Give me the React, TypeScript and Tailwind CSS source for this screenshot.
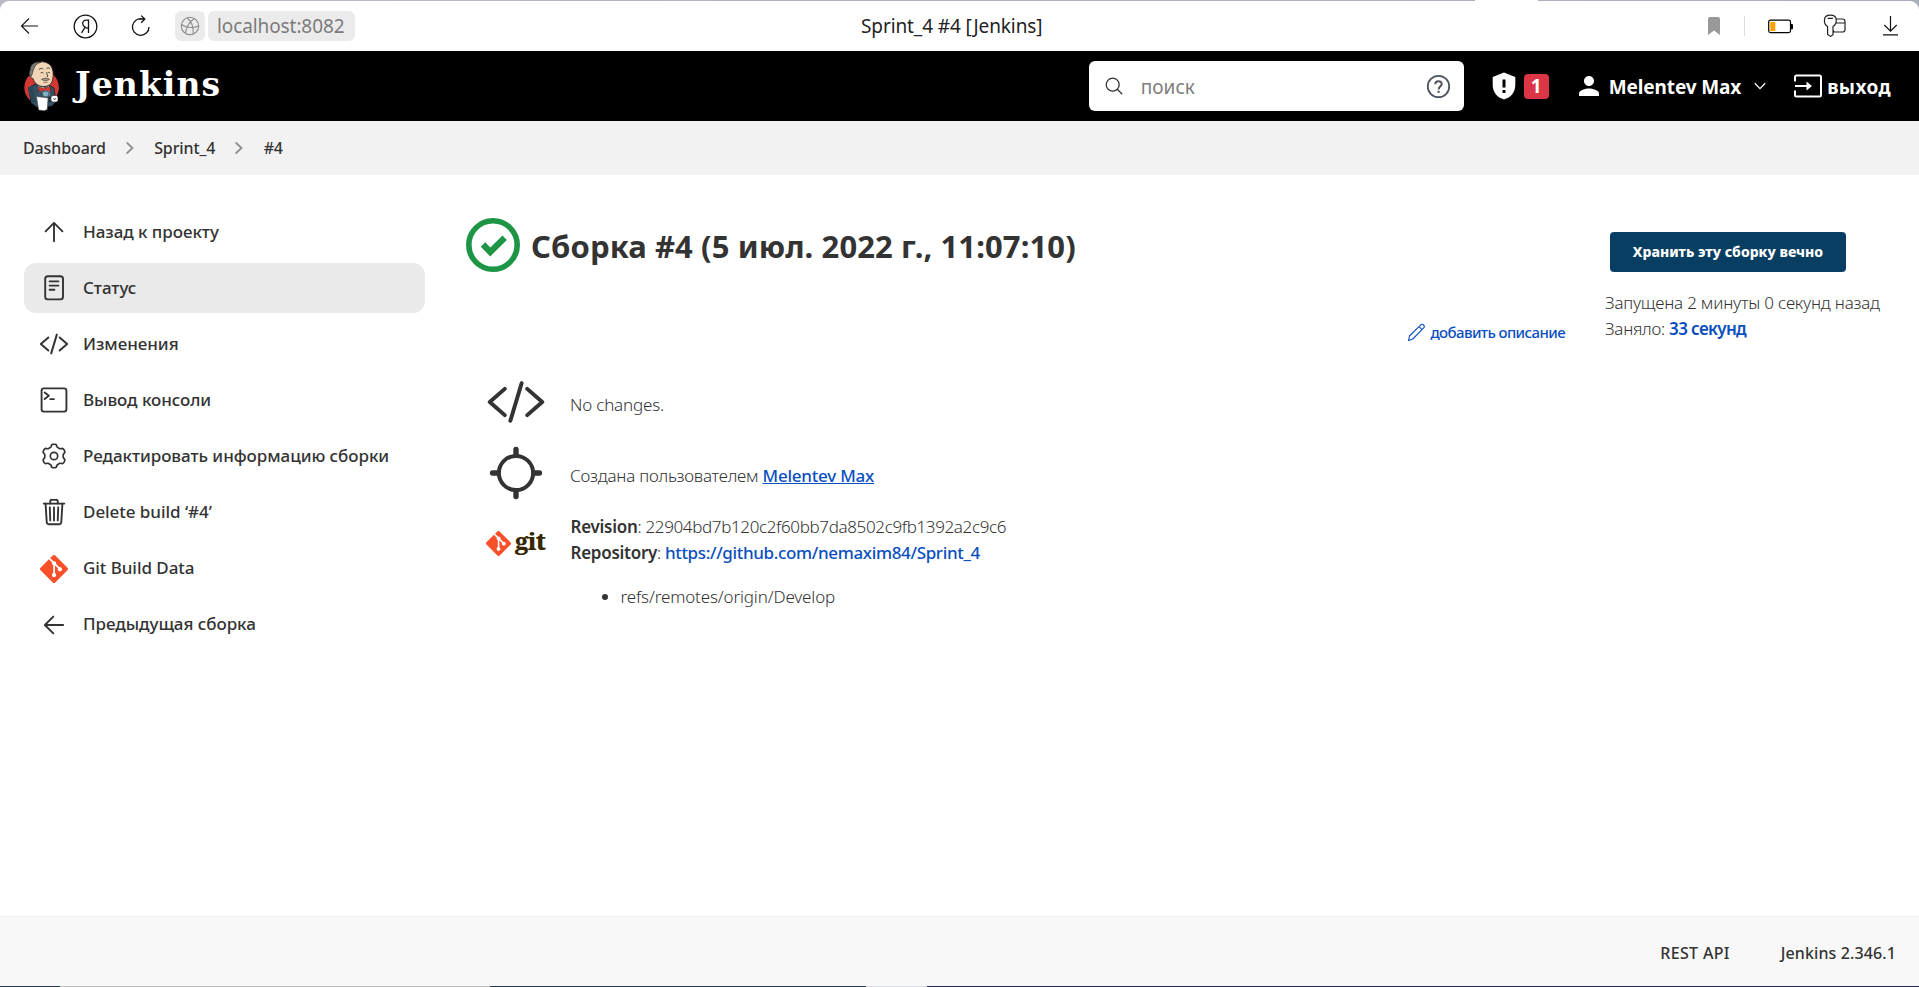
import React from "react";
import { IoTrashOutline } from "react-icons/io5";
import { SiGit } from "react-icons/si";

const CodeIcon = ({ className }: { className: string }) => (
  <svg viewBox="0 0 512 512" className={className} fill="none" stroke="currentColor" strokeWidth="34" strokeLinecap="round" strokeLinejoin="round">
    <path d="M160 368 32 256l128-112M352 368l128-112-128-112M304 96l-96 320" />
  </svg>
);

const stroke = { fill: "none", stroke: "currentColor", strokeWidth: 32, strokeLinecap: "round", strokeLinejoin: "round" } as const;

const ArrowUp = () => (
  <svg viewBox="0 0 512 512" className="size-[30px]" {...stroke}><path d="M112 244 256 100l144 144M256 120v292" /></svg>
);
const ArrowLeft = () => (
  <svg viewBox="0 0 512 512" className="size-[30px]" {...stroke}><path d="M244 400 100 256l144-144M120 256h292" /></svg>
);
const DocIcon = () => (
  <svg viewBox="0 0 30 30" className="size-[30px]" {...stroke} strokeWidth="1.9">
    <rect x="6.2" y="3.2" width="17.8" height="23.2" rx="2.6" />
    <path d="M10.6 8.4h8.8M10.6 12.6h8.8M10.6 16.8h4.8" />
  </svg>
);
const TerminalIcon = () => (
  <svg viewBox="0 0 512 512" className="size-[30px]" {...stroke}>
    <rect x="44" y="58" width="424" height="396" rx="40" />
    <path d="M96 128l72 56-72 56M192 240h64" />
  </svg>
);

// Six-lobed gear outline sampled in polar coordinates.
const gearPoints = Array.from({ length: 144 }, (_, i) => {
  const a = (i / 144) * Math.PI * 2;
  const r = 10.5 + 1.3 * Math.tanh(2.2 * Math.cos(6 * a));
  return `${(15 + r * Math.sin(a)).toFixed(2)},${(15 - r * Math.cos(a)).toFixed(2)}`;
}).join(" ");
const GearIcon = () => (
  <svg viewBox="0 0 30 30" className="size-[30px]" {...stroke} strokeWidth="1.7">
    <polygon points={gearPoints} />
    <circle cx="15" cy="15" r="3.700" />
  </svg>
);

const Butler = () => (
  <svg viewBox="0 0 38 52" className="h-[52px] w-[38px]">
    <circle cx="18.6" cy="27.5" r="17.3" fill="#d33833" />
    <path d="M6 28 12 24l14 1 5 3 2 14-4 4-14 2-7-5z" fill="#335061" stroke="#101a20" strokeWidth=".8" />
    <path d="M4.8 27.5 9.5 25l4 18-4-1-3.3-7z" fill="#2c4656" />
    <path d="M15 26l7 2 4-2 1 9-5 3-5-3z" fill="#f4f4f4" />
    <path d="M9 6c4-6 17-6 20 2 2 5 1 9 .5 12-1 5-5 6.500-9 6.500-5 0-9-3-10.500-8C6 18 6 13 9 12z" fill="#f0d6b7" stroke="#231f20" strokeWidth=".8" />
    <path d="M18 2.200C11 1.200 7 5 7.200 10c-1.500 2-1.200 5 .5 7l1.800-3.500c-.3-2 .8-3 1.500-5C11.600 5.500 14 3.500 18 2.200z" fill="#7b7878" stroke="#231f20" strokeWidth=".6" />
    <path d="M16 9.500c1.500-1.400 3-1.400 4.400-.4M23.500 8.500c1.200-1 2.400-.8 3.400.2M17.500 13c1.200-.8 2.200-.6 3 .1M24.500 12.800c1-.5 1.600-.5 2.400 0M23.500 12.500c0 2 2.200 3 .7 4.500" fill="none" stroke="#231f20" strokeWidth=".8" />
    <path d="M18.500 19.500c2-1.600 6-1.800 8-.2-1.500 1.400-5.500 1.800-8 .2zM20.500 22.300h4" fill="#a89a86" stroke="#3a312a" strokeWidth=".6" />
    <path d="M15.500 26.500l5 2 6.500-2 .8 5-5.500-1.200-6.500 1.700z" fill="#d33833" stroke="#5c1513" strokeWidth=".5" />
    <path d="M16 32l6-1.500 5 1.500-1 5-5 1-4-1.500z" fill="#335061" />
    <path d="M19 32.500l3.500-1.500 3.500 1.500-1 4h-4.500z" fill="#81b0c4" stroke="#335061" strokeWidth=".5" />
    <path d="M13.500 36.500 25 38l-.8 11.500-3 1.200-5.500-.6z" fill="#fff" stroke="#444" strokeWidth=".5" />
    <path d="M25 38h5M25 41h5" stroke="#1d1919" strokeWidth="1" />
    <rect x="28" y="35.500" width="7" height="6.500" rx="2" fill="#fff" stroke="#222" strokeWidth=".6" />
    <path d="M30 38.500l2 1.200 1-1.800" fill="none" stroke="#222" strokeWidth=".7" />
  </svg>
);

const BrowserBar = () => (
  <div className="h-[51px] bg-[#b4b4bf] bg-gradient-to-r from-[#b9b9c6] to-[#a9aeb8] pt-px">
    <div className="relative flex h-[50px] items-center rounded-t-[9px] bg-white text-black">
      <div className="absolute -top-px left-[1475px] h-px w-[63px] bg-white" />
      <svg className="ml-[20px] size-[20px]" viewBox="0 0 20 20" fill="none" stroke="#111" strokeWidth="1.100"><path d="M18 10H1.500M9 2.500 1.500 10 9 17.500" /></svg>
      <svg className="ml-[33px] size-[25px]" viewBox="0 0 25 25" fill="none" stroke="#111" strokeWidth="1.300">
        <circle cx="12.500" cy="12.500" r="11.300" />
        <path d="M15.500 19V6.200h-2.300c-2.200 0-3.500 1.300-3.500 3.300 0 1.700.9 2.700 2.500 3.700l-3.700 5.600M12.200 13.400c1 .6 2 .9 3.300.6" />
      </svg>
      <svg className="ml-[32px] size-[22px]" viewBox="0 0 22 22" fill="none" stroke="#111" strokeWidth="1.300"><path d="M12.500 3.900A8.300 8.300 0 1 0 19 12M8.500 4h6.300M11.200.6 14.800 4l-3.600 3.700" /></svg>
      <div className="ml-[23px] flex size-[30px] items-center justify-center rounded-[6px] bg-[#ebebeb]">
        <svg className="size-[20px]" viewBox="0 0 20 20" fill="none" stroke="#8a8a8a" strokeWidth="1.100"><circle cx="10" cy="10" r="8.700" /><path d="M14.500 2.500C10 5 6 11 5.500 17.500M7 1.800c4 3 6.500 9 6.300 16M1.500 8.500c5 3.500 12 4 16.500 1.500" /></svg>
      </div>
      <div className="ml-[3px] flex h-[30px] w-[147px] items-center rounded-[6px] bg-[#ebebeb] pt-px pl-[9px] text-[19px] tracking-[-0.1px] text-[#7b7b7b]">localhost:8082</div>
      <div className="ml-[506px] pt-px text-[19px] tracking-[-0.1px] text-[#222]">Sprint_4 #4 [Jenkins]</div>
      <svg className="ml-auto h-[18px] w-[12px]" viewBox="0 0 12 18"><path d="M0 2a2 2 0 0 1 2-2h8a2 2 0 0 1 2 2v16l-6-4.500L0 18z" fill="#999" /></svg>
      <div className="ml-[24px] h-[20px] w-px bg-[#dcdcdc]" />
      <svg className="ml-[23px] h-[15px] w-[26px]" viewBox="0 0 26 15"><rect x=".7" y="1.200" width="21.800" height="12.400" rx="1.800" fill="none" stroke="#000" strokeWidth="1.200" /><rect x="2.300" y="3" width="5" height="9" fill="#ffa200" /><path d="M23 5h1.500l.5.600v4l-.5.600H23z" fill="#000" /></svg>
      <svg className="ml-[29px] size-[24px]" viewBox="0 0 24 24" fill="none" stroke="#222" strokeWidth="1.200"><path d="M4.600 12.500C1.800 11 1.200 8 1.500 5.500 1.700 2.500 3 1.200 7.300 1.200s5.700 1.300 5.900 4.300c.2 2.500-.4 5.500-3.200 7v8.200l-2.400 1.700-3-1.900zM4.600 4.400h5.300M13 5h6.500a2.500 2.500 0 0 1 2.500 2.500v8a2.500 2.500 0 0 1-2.500 2.500H12a2 2 0 0 1-2-2M13 9h9" /></svg>
      <svg className="mr-[20px] ml-[35px] h-[20px] w-[17px]" viewBox="0 0 17 20" fill="none" stroke="#111" strokeWidth="1.200"><path d="M8.500 0v15M2.300 9l6.200 6.200L14.700 9M1 18.800h15" /></svg>
    </div>
  </div>
);

const Header = () => (
  <header className="flex h-[70px] items-center bg-black text-white">
    <div className="ml-[23px]"><Butler /></div>
    <div className="ml-[14px] pb-[4px] font-['DejaVu_Serif',serif] text-[33px] leading-none font-bold tracking-[1.1px]">Jenkins</div>
    <div className="ml-auto flex h-[50px] w-[375px] items-center rounded-[6px] bg-white">
      <svg className="ml-[16px] size-[18px]" viewBox="0 0 18 18" fill="none" stroke="#333" strokeWidth="1.300" strokeLinecap="round"><circle cx="7.700" cy="7.700" r="6.500" /><path d="M12.500 12.500 16.800 16.800" /></svg>
      <div className="ml-[18px] pt-[2px] text-[19px] text-[#7d7d7d]">поиск</div>
      <svg className="mr-[13px] ml-auto size-[25px]" viewBox="0 0 25 25" fill="none" stroke="#4d545d" strokeWidth="1.800"><circle cx="12.500" cy="12.500" r="10.700" /><path d="M9.300 10.200c0-4 6.400-4 6.400-.2 0 2.600-3.100 2.600-3.100 5.400" strokeWidth="2" /><path d="M11.500 16.800h2.100v2.100h-2.100z" fill="#4d545d" stroke="none" /></svg>
    </div>
    <svg className="ml-[28px] h-[28px] w-[24px]" viewBox="0 0 24 28"><path d="M12 .5 23.300 5v8c0 7-4.500 12.500-11.300 14.500C5.200 25.500.700 20 .700 13V5z" fill="#fff" /><path d="M10.500 7.500h3v8h-3zM10.500 18h3v3h-3z" fill="#000" /></svg>
    <div className="ml-[8px] flex size-[25px] items-center justify-center rounded-[4px] bg-[#dc3545] pt-px text-[19px] font-bold">1</div>
    <svg className="ml-[30px] size-[20px]" viewBox="4 4 16 16" fill="#fff"><path d="M12 12c2.210 0 4-1.790 4-4s-1.790-4-4-4-4 1.790-4 4 1.790 4 4 4zm0 2c-2.670 0-8 1.340-8 4v2h16v-2c0-2.660-5.330-4-8-4z" /></svg>
    <div className="ml-[10px] pt-[2px] text-[19px] font-bold tracking-[-0.13px]">Melentev Max</div>
    <svg className="ml-[13px] h-[8px] w-[12px]" viewBox="0 0 12 8" fill="none" stroke="#fff" strokeWidth="1.300"><path d="M.8 1.200 6 6.600l5.200-5.400" /></svg>
    <svg className="ml-[28px] h-[24px] w-[28px]" viewBox="0 0 28 24" fill="none" stroke="#fff" strokeWidth="2"><path d="M1 7.500V3a1.500 1.500 0 0 1 1.500-1.500h23A1.500 1.500 0 0 1 27 3v18a1.500 1.500 0 0 1-1.500 1.500h-23A1.500 1.500 0 0 1 1 21v-4.500M1 12h14.500" /><path d="M12.500 7.500 18 12l-5.500 4.500z" fill="#fff" stroke="none" /></svg>
    <div className="mr-[28px] ml-[5px] pt-[2px] text-[19px] font-bold tracking-[0.4px]">выход</div>
  </header>
);

const Sep = () => (
  <svg className="h-[14px] w-[8px]" viewBox="0 0 8 14" fill="none" stroke="#8f8f8f" strokeWidth="1.800" strokeLinecap="round"><path d="M1.200 2 6.500 7l-5.300 5" /></svg>
);

const tasks = [
  { label: "Назад к проекту", icon: <ArrowUp /> },
  { label: "Статус", icon: <DocIcon />, active: true },
  { label: "Изменения", icon: <CodeIcon className="size-[30px]" /> },
  { label: "Вывод консоли", icon: <TerminalIcon /> },
  { label: "Редактировать информацию сборки", icon: <GearIcon /> },
  { label: "Delete build ‘#4’", icon: <IoTrashOutline size={30} /> },
  { label: "Git Build Data", icon: <SiGit size={28} color="#f9502c" /> },
  { label: "Предыдущая сборка", icon: <ArrowLeft /> },
];

const Sidebar = () => (
  <nav className="mt-[32px] ml-[24px] flex w-[401px] shrink-0 flex-col gap-[6.1px]">
    {tasks.map((t) => (
      <a key={t.label} className={`flex h-[50px] items-center rounded-[12px] text-[17px] font-medium tracking-[-0.05px] whitespace-nowrap ${t.active ? "bg-[#eaeaea]" : ""}`}>
        <span className="ml-[15px] flex w-[30px] justify-center">{t.icon}</span>
        <span className="ml-[14px] pb-px">{t.label}</span>
      </a>
    ))}
  </nav>
);

const Build = () => (
  <main className="ml-[41px] flex flex-1">
    <div className="w-[1099px] shrink-0">
      <div className="mt-[43px] flex h-[54px] items-center">
        <svg className="size-[54px]" viewBox="0 0 54 54" fill="none" stroke="#1d9544"><circle cx="27" cy="27" r="24.200" strokeWidth="5.600" /><path d="M17 26.500l7.300 7.500L38.700 19.800" strokeWidth="6.200" /></svg>
        <h1 className="ml-[11px] pt-[3px] text-[31px] font-bold tracking-[0.1px] whitespace-nowrap">Сборка #4 (5 июл. 2022 г., 11:07:10)</h1>
      </div>
      <div className="mt-[50px] flex h-[20px] items-center justify-end text-[15px] font-medium tracking-[-0.6px] text-[#0b4fbf]">
        <svg className="mr-[4px] size-[19px]" viewBox="0 0 19 19" fill="none" stroke="#0b4fbf" strokeWidth="1.100" strokeLinejoin="round"><path d="M1.500 17.500l1-4.500L13.700 1.900c2-1.700 4.700 1 3 3L5.800 16zM12 3.600 15.200 6.900" /></svg>
        добавить описание
      </div>
      <div className="mt-[24px] flex h-[71px] items-center pl-[20px] text-[17px] font-light">
        <CodeIcon className="size-[60px]" />
        <span className="ml-[24px] pt-[7px] tracking-[-0.19px]">No changes.</span>
      </div>
      <div className="flex h-[72px] items-center pl-[20px] text-[17px] font-light">
        <svg className="size-[60px]" viewBox="0 0 512 512" fill="none" stroke="currentColor" strokeLinecap="round" strokeWidth="46"><circle cx="256" cy="256" r="146" strokeWidth="34" /><path d="M256 96V56M256 456v-40M416 256h40M56 256h40" /></svg>
        <span className="ml-[24px] pt-[6px] tracking-[-0.23px]">Создана пользователем <a className="font-medium text-[#0b4fbf] underline">Melentev Max</a></span>
      </div>
      <div className="flex pl-[20px] text-[17px] leading-[26px] font-light">
        <div className="mt-[21px] flex h-[26px] w-[62px] items-center">
          <SiGit size={25} color="#f9502c" />
          <span className="ml-[4px] pb-[5px] font-['Noto_Serif',serif] text-[24px] leading-none font-extrabold tracking-[-0.8px] text-[#362701]">git</span>
        </div>
        <div className="ml-[22.5px] pt-[5px]">
          <div className="tracking-[-0.36px]"><b className="font-semibold tracking-[-0.26px]">Revision</b>: 22904bd7b120c2f60bb7da8502c9fb1392a2c9c6</div>
          <div className="tracking-[-0.35px]"><b className="font-semibold tracking-[-0.27px]">Repository</b>: <a className="font-medium text-[#0b4fbf]">https://github.com/nemaxim84/Sprint_4</a></div>
          <ul className="mt-[18px] list-disc pl-[50px] tracking-[-0.14px]"><li>refs/remotes/origin/Develop</li></ul>
        </div>
      </div>
    </div>
    <div className="ml-[40px] text-[17px] leading-[26px] font-light whitespace-nowrap">
      <button className="mt-[57px] ml-[5px] block h-[40px] w-[236px] rounded-[4px] bg-[#083e61] text-[14px] font-extrabold tracking-[0.02px] text-white">Хранить эту сборку вечно</button>
      <div className="mt-[18px] tracking-[-0.22px]">Запущена 2 минуты 0 секунд назад</div>
      <div className="tracking-[-0.26px]">Заняло: <a className="font-semibold tracking-[-0.65px] text-[#0b4fbf]">33 секунд</a></div>
    </div>
  </main>
);

export default function App() {
  return (
    <div className="flex h-[987px] w-[1919px] flex-col overflow-hidden bg-white font-['Noto_Sans',sans-serif] text-[#333]">
      <BrowserBar />
      <Header />
      <div className="flex h-[54px] items-center gap-[20.2px] bg-[#f2f2f2] pl-[23px] text-[16px] font-medium tracking-[-0.12px]">
        <span>Dashboard</span><Sep /><span>Sprint_4</span><Sep /><span>#4</span>
      </div>
      <div className="flex flex-1"><Sidebar /><Build /></div>
      <footer className="flex h-[70px] items-center justify-end gap-[51px] border-t border-[#eeeeee] bg-[#f8f8f8] pt-[2px] pr-[23px] font-medium">
        <span className="text-[16px] tracking-[0.33px]">REST API</span><span className="text-[16px] tracking-[0.11px]">Jenkins 2.346.1</span>
      </footer>
      <div className="flex h-px bg-[#1c2d4c]">
        <div className="w-[60px] bg-[#1f3b4d]" /><div className="w-[430px] bg-[#bcbcbc]" /><div className="w-[376px] bg-[#1f3b4d]" /><div className="w-[61px] bg-[#d9dae3]" />
      </div>
    </div>
  );
}
